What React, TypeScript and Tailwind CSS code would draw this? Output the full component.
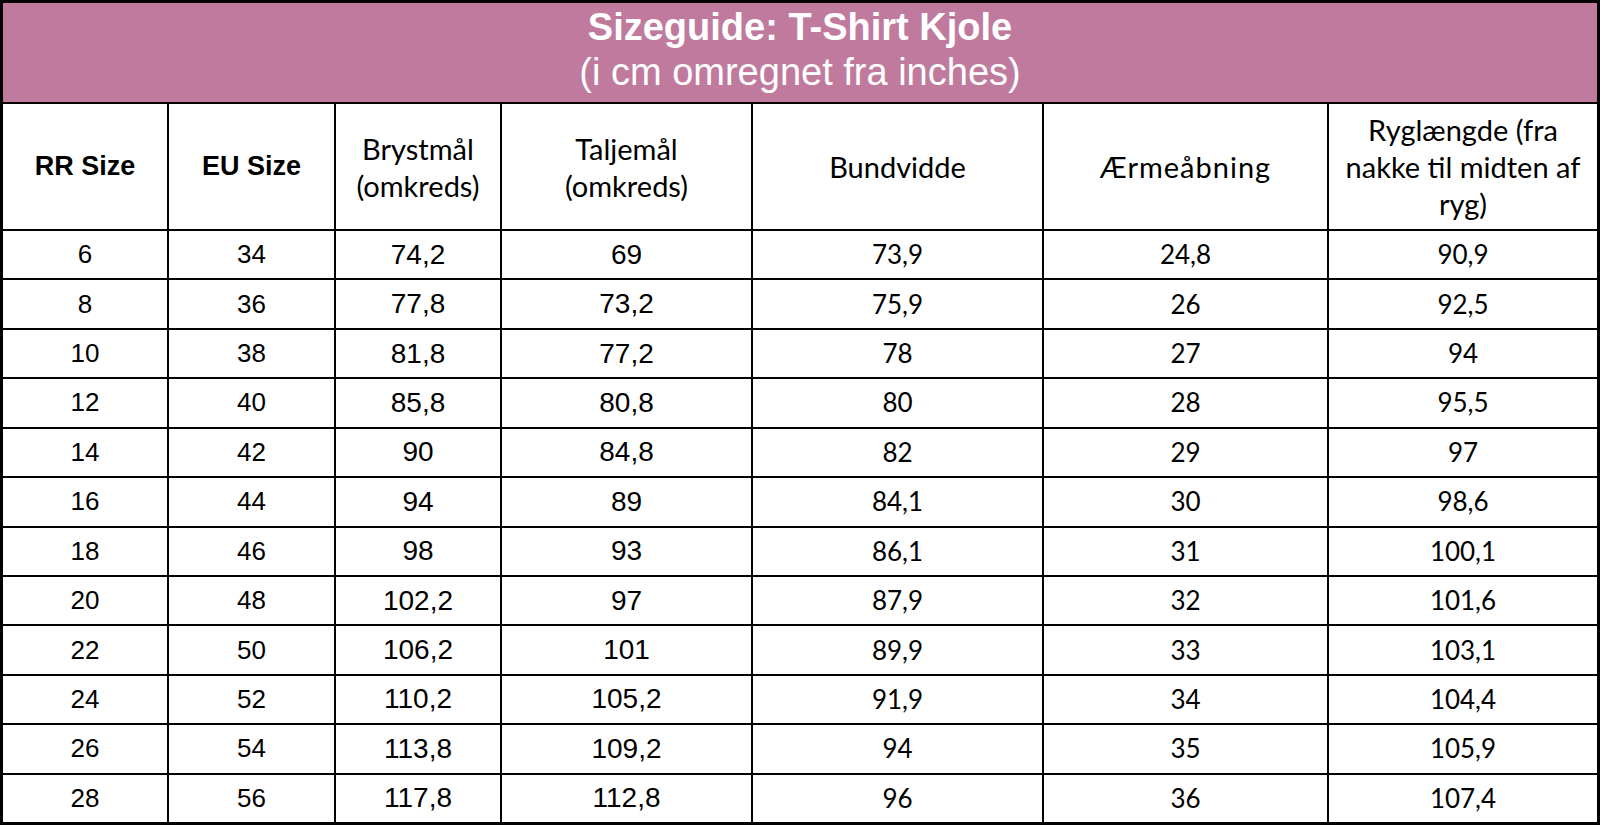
const rows: string[][] = [
  ["6", "34", "74,2", "69", "73,9", "24,8", "90,9"],
  ["8", "36", "77,8", "73,2", "75,9", "26", "92,5"],
  ["10", "38", "81,8", "77,2", "78", "27", "94"],
  ["12", "40", "85,8", "80,8", "80", "28", "95,5"],
  ["14", "42", "90", "84,8", "82", "29", "97"],
  ["16", "44", "94", "89", "84,1", "30", "98,6"],
  ["18", "46", "98", "93", "86,1", "31", "100,1"],
  ["20", "48", "102,2", "97", "87,9", "32", "101,6"],
  ["22", "50", "106,2", "101", "89,9", "33", "103,1"],
  ["24", "52", "110,2", "105,2", "91,9", "34", "104,4"],
  ["26", "54", "113,8", "109,2", "94", "35", "105,9"],
  ["28", "56", "117,8", "112,8", "96", "36", "107,4"],
];

const arial = "font-['Liberation_Sans',Arial,sans-serif]";
const calibri = "font-['Lato','Open_Sans',sans-serif]";

// per column: font class for the data cells
const cellFont = [
  `${arial} text-[26px]`,
  `${arial} text-[26px]`,
  `${arial} text-[28px]`,
  `${arial} text-[28px]`,
  `${calibri} text-[26px]`,
  `${calibri} text-[26px]`,
  `${calibri} text-[26px]`,
];

function HeadCell({ children, bold }: { children: React.ReactNode; bold?: boolean }) {
  return (
    <div
      className={`bg-white flex items-center justify-center text-center text-black ${
        bold ? `${arial} font-bold text-[27px]` : `${calibri} text-[29px] leading-[37px]`
      }`}
    >
      <div>{children}</div>
    </div>
  );
}

export default function App() {
  return (
    <div className="w-[1600px] h-[825px] border-[3px] border-black bg-black flex flex-col gap-[2px] overflow-hidden">
      {/* Title */}
      <div className="h-[99px] shrink-0 bg-[#c07a9e] text-white text-center pt-[2px] font-['Liberation_Sans',Arial,sans-serif]">
        <div className="text-[38px] font-bold leading-[45px]">Sizeguide: T-Shirt Kjole</div>
        <div className="text-[38px] leading-[44px]">(i cm omregnet fra inches)</div>
      </div>

      {/* Table */}
      <div className="flex-1 grid grid-cols-[164px_165px_164px_249px_289px_283px_1fr] grid-rows-[125px_repeat(12,1fr)] gap-[2px]">
        <HeadCell bold>RR Size</HeadCell>
        <HeadCell bold>EU Size</HeadCell>
        <HeadCell>
          Brystmål
          <br />
          (omkreds)
        </HeadCell>
        <HeadCell>
          Taljemål
          <br />
          (omkreds)
        </HeadCell>
        <HeadCell>Bundvidde</HeadCell>
        <HeadCell>
          <span className="tracking-[1px]">Ærmeåbning</span>
        </HeadCell>
        <HeadCell>
          Ryglængde (fra
          <br />
          nakke til midten af
          <br />
          ryg)
        </HeadCell>

        {rows.map((row, r) =>
          row.map((val, c) => (
            <div
              key={`${r}-${c}`}
              className={`bg-white flex items-center justify-center text-black ${cellFont[c]}`}
            >
              {val}
            </div>
          ))
        )}
      </div>
    </div>
  );
}
